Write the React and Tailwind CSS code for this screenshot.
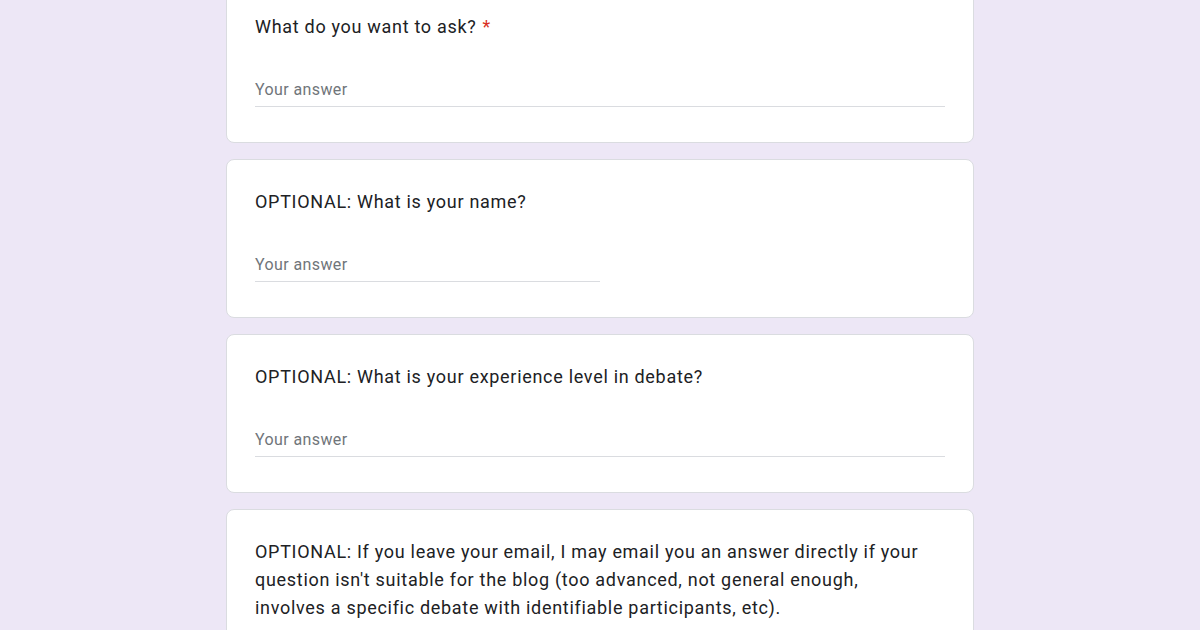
const questions = [
  { lines: ["What do you want to ask?"], required: true, wide: true },
  { lines: ["OPTIONAL: What is your name?"], wide: false },
  { lines: ["OPTIONAL: What is your experience level in debate?"], wide: true },
  {
    lines: [
      "OPTIONAL: If you leave your email, I may email you an answer directly if your",
      "question isn't suitable for the blog (too advanced, not general enough,",
      "involves a specific debate with identifiable participants, etc).",
    ],
    wide: true,
  },
];

function QuestionCard({ q }) {
  return (
    <div className="bg-white border border-[#dadce0] rounded-lg px-[28px] pt-[28px] pb-[35px]">
      <div className="text-[18px] leading-[28px] text-[#202124] tracking-[0.7px]">
        {q.lines.map((line, i) => (
          <div key={i}>
            {line}
            {q.required && <span className="text-[#d93025] ml-[6px]">*</span>}
          </div>
        ))}
      </div>
      <div
        className={`mt-[37px] border-b border-[#dadce0] pb-[4px] ${
          q.wide ? "w-full" : "w-[345px]"
        }`}
      >
        <div className="text-[16px] leading-[24px] text-[#70757a] tracking-[0.4px]">
          Your answer
        </div>
      </div>
    </div>
  );
}

export default function App() {
  return (
    <div
      className="h-[630px] overflow-hidden bg-[#ede7f6]"
      style={{ fontFamily: "Roboto, 'Noto Sans', Arial, sans-serif" }}
    >
      <div className="w-[748px] mx-auto -mt-[16px] flex flex-col gap-[16px]">
        {questions.map((q, i) => (
          <QuestionCard key={i} q={q} />
        ))}
      </div>
    </div>
  );
}
